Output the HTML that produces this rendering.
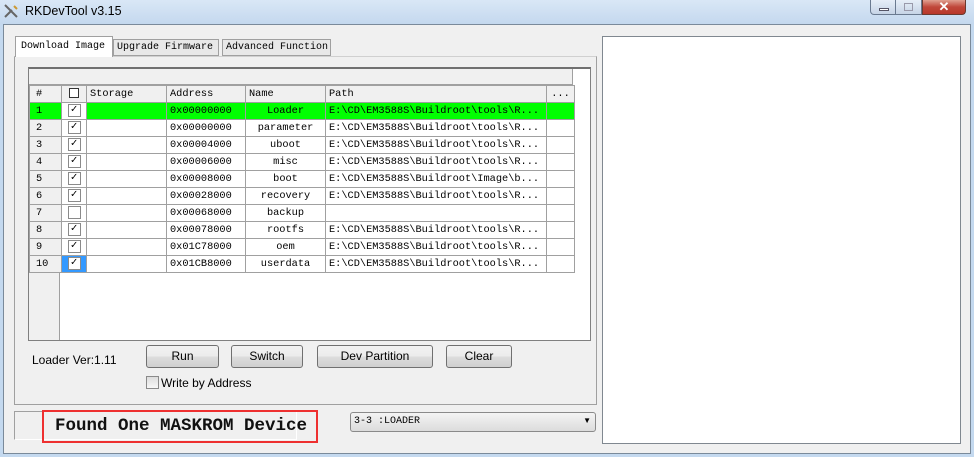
<!DOCTYPE html>
<html><head><style>
*{margin:0;padding:0;box-sizing:border-box}
body{width:974px;height:457px;position:relative;overflow:hidden;background:#c4d9ef;font-family:"Liberation Sans",sans-serif;font-size:12px}
.a{position:absolute}
.mono{font-family:"Liberation Mono","Noto Sans CJK SC",monospace;font-size:10px;white-space:nowrap}
.btn{position:absolute;height:23px;border:1px solid #707070;border-radius:3px;background:linear-gradient(#f2f2f2,#ebebeb 50%,#dddddd 51%,#cfcfcf);text-align:center;line-height:21px;font-size:12px}
table{border-collapse:collapse;position:absolute;left:29px;top:85px;table-layout:fixed;width:545px}
td{height:17px;border:1px solid #a0a0a0;padding:0 3px;white-space:nowrap;overflow:hidden;font-family:"Liberation Mono",monospace;font-size:10.3px;line-height:16px}
td.n{background:#f0f0f0}
.cb{display:inline-block;width:13px;height:13px;border:1px solid #8a8a8a;background:#fff;font-size:11px;line-height:11px;text-align:center;font-weight:bold;vertical-align:middle}
</style></head><body>
<div class="a" style="left:0;top:0;width:974px;height:24px;background:linear-gradient(#d9e7f6,#c4d8ee)"></div>
<svg class="a" style="left:3px;top:3px" width="16" height="16"><path d="M2 2 L14 14 M2 14 L9 7" stroke="#666" stroke-width="2"/><path d="M11 3 L14 6" stroke="#c93" stroke-width="2"/></svg>
<div class="a" style="left:25px;top:4px;font-size:12.5px">RKDevTool v3.15</div>
<div class="a" style="left:870px;top:0;width:26px;height:15px;border:1px solid #6a7a90;border-top:0;border-radius:0 0 0 4px;background:linear-gradient(#e6eef8,#c6d4e6)"><div class="a" style="left:8px;top:8px;width:10px;height:3px;border:1px solid #556;background:#fff"></div></div>
<div class="a" style="left:896px;top:0;width:26px;height:15px;border:1px solid #6a7a90;border-top:0;border-left:0;background:linear-gradient(#e6eef8,#c6d4e6)"><div class="a" style="left:8px;top:3px;width:9px;height:8px;border:1px solid #99a"></div></div>
<div class="a" style="left:922px;top:0;width:44px;height:15px;border:1px solid #6a3a30;border-top:0;border-radius:0 0 4px 0;background:linear-gradient(#e0a090,#c0473a 50%,#b8382a);color:#fff;text-align:center;font-weight:bold;line-height:13px;font-size:13px">✕</div>
<div class="a" style="left:3px;top:24px;width:968px;height:430px;background:#f0f0f0;border:1px solid #7a8a9a"></div>
<div class="a" style="left:14px;top:56px;width:583px;height:349px;border:1px solid #a0a0a0;background:#f0f0f0;border-top-color:#d0d0d0"></div>
<div class="a mono" style="left:15px;top:36px;width:98px;height:21px;background:#fff;border:1px solid #a0a0a0;border-bottom:0;padding:4px 0 0 5px">Download Image</div>
<div class="a mono" style="left:113px;top:39px;width:106px;height:17px;background:#e8e8e8;border:1px solid #a0a0a0;padding:2px 0 0 3px">Upgrade Firmware</div>
<div class="a mono" style="left:222px;top:39px;width:109px;height:17px;background:#e8e8e8;border:1px solid #a0a0a0;padding:2px 0 0 3px">Advanced Function</div>
<div class="a" style="left:28px;top:67px;width:563px;height:274px;background:#fff;border:1px solid #808080;border-top:2px solid #707070"></div>
<div class="a" style="left:29px;top:69px;width:544px;height:16px;background:#f0f0f0;border-bottom:1px solid #a0a0a0;border-right:1px solid #a0a0a0"></div>
<div class="a" style="left:29px;top:271px;width:31px;height:69px;background:#f0f0f0;border-right:1px solid #a0a0a0"></div>
<table>
<colgroup><col style="width:32px"><col style="width:25px"><col style="width:80px"><col style="width:79px"><col style="width:80px"><col style="width:221px"><col style="width:28px"></colgroup>
<tr style="background:#f0f0f0"><td style="padding-left:6px">#</td><td style="text-align:center"><span class="cb" style="border-color:#333;width:10px;height:10px"></span></td><td>Storage</td><td>Address</td><td>Name</td><td>Path</td><td style="text-align:center">...</td></tr>
<tr style="background:#00ff00"><td style="background:#00ff00;padding-left:6px">1</td><td style="background:#fff;text-align:center"><span class="cb">✓</span></td><td></td><td>0x00000000</td><td style="text-align:center">Loader</td><td>E:\CD\EM3588S\Buildroot\tools\R...</td><td></td></tr>
<tr><td class="n" style="padding-left:6px">2</td><td style="text-align:center"><span class="cb">✓</span></td><td></td><td>0x00000000</td><td style="text-align:center">parameter</td><td>E:\CD\EM3588S\Buildroot\tools\R...</td><td></td></tr>
<tr><td class="n" style="padding-left:6px">3</td><td style="text-align:center"><span class="cb">✓</span></td><td></td><td>0x00004000</td><td style="text-align:center">uboot</td><td>E:\CD\EM3588S\Buildroot\tools\R...</td><td></td></tr>
<tr><td class="n" style="padding-left:6px">4</td><td style="text-align:center"><span class="cb">✓</span></td><td></td><td>0x00006000</td><td style="text-align:center">misc</td><td>E:\CD\EM3588S\Buildroot\tools\R...</td><td></td></tr>
<tr><td class="n" style="padding-left:6px">5</td><td style="text-align:center"><span class="cb">✓</span></td><td></td><td>0x00008000</td><td style="text-align:center">boot</td><td>E:\CD\EM3588S\Buildroot\Image\b...</td><td></td></tr>
<tr><td class="n" style="padding-left:6px">6</td><td style="text-align:center"><span class="cb">✓</span></td><td></td><td>0x00028000</td><td style="text-align:center">recovery</td><td>E:\CD\EM3588S\Buildroot\tools\R...</td><td></td></tr>
<tr><td class="n" style="padding-left:6px">7</td><td style="text-align:center"><span class="cb"></span></td><td></td><td>0x00068000</td><td style="text-align:center">backup</td><td></td><td></td></tr>
<tr><td class="n" style="padding-left:6px">8</td><td style="text-align:center"><span class="cb">✓</span></td><td></td><td>0x00078000</td><td style="text-align:center">rootfs</td><td>E:\CD\EM3588S\Buildroot\tools\R...</td><td></td></tr>
<tr><td class="n" style="padding-left:6px">9</td><td style="text-align:center"><span class="cb">✓</span></td><td></td><td>0x01C78000</td><td style="text-align:center">oem</td><td>E:\CD\EM3588S\Buildroot\tools\R...</td><td></td></tr>
<tr><td class="n" style="padding-left:6px">10</td><td style="text-align:center;background:#3399ff"><span class="cb">✓</span></td><td></td><td>0x01CB8000</td><td style="text-align:center">userdata</td><td>E:\CD\EM3588S\Buildroot\tools\R...</td><td></td></tr>
</table>
<div class="a" style="left:32px;top:353px">Loader Ver:1.11</div>
<div class="btn" style="left:146px;top:345px;width:73px">Run</div>
<div class="btn" style="left:231px;top:345px;width:72px">Switch</div>
<div class="btn" style="left:317px;top:345px;width:116px">Dev Partition</div>
<div class="btn" style="left:446px;top:345px;width:66px">Clear</div>
<div class="a" style="left:146px;top:376px;width:13px;height:13px;border:1px solid #8a8a8a;background:linear-gradient(#ddd,#f8f8f8)"></div>
<div class="a" style="left:161px;top:376px">Write by Address</div>
<div class="a" style="left:14px;top:411px;width:283px;height:29px;border:1px solid #a0a0a0;border-right-color:#fff;border-bottom-color:#fff"></div>
<div class="a" style="left:42px;top:410px;width:276px;height:33px;border:2px solid #ee3030"></div>
<div class="a" style="left:55px;top:416px;font-family:'Liberation Mono',monospace;font-size:17.5px;font-weight:bold;color:#111">Found One MASKROM Device</div>
<div class="a" style="left:350px;top:412px;width:246px;height:20px;border:1px solid #8a8a8a;border-radius:3px;background:linear-gradient(#f4f4f4,#dcdcdc)"><span class="a mono" style="left:3px;top:3px">3-3 :LOADER</span><span class="a" style="right:4px;top:3px;font-size:8px">▼</span></div>
<div class="a" style="left:602px;top:36px;width:359px;height:408px;background:#fff;border:1px solid #808890"></div>
</body></html>
